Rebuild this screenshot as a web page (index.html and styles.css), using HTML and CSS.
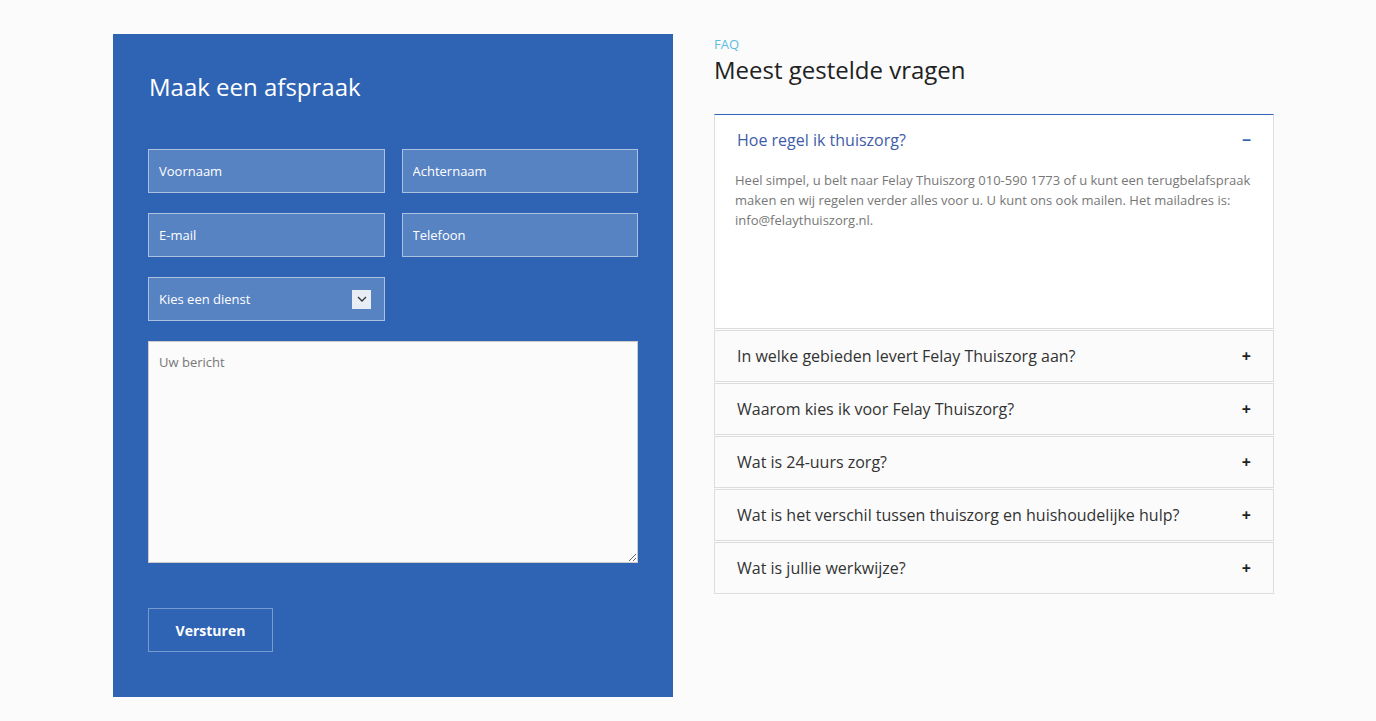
FILE: index.html
```html
<!DOCTYPE html>
<html lang="nl">
<head>
    <meta charset="UTF-8">
    <title>Maak een afspraak</title>
    <link rel="stylesheet" href="styles.css">
</head>
<body>
    <div class="wrapper">
        <div class="appointment">
            <h2>Maak een afspraak</h2>
            <form class="form">
                <div class="row">
                    <input class="field" type="text" placeholder="Voornaam">
                    <input class="field" type="text" placeholder="Achternaam">
                </div>
                <div class="row">
                    <input class="field" type="text" placeholder="E-mail">
                    <input class="field" type="text" placeholder="Telefoon">
                </div>
                <div class="row">
                    <div class="field select">
                        <span>Kies een dienst</span>
                        <span class="select-arrow">
                            <svg width="10" height="6" viewBox="0 0 10 6"><path d="M1 1l4 4 4-4" fill="none" stroke="#333" stroke-width="1.3"/></svg>
                        </span>
                    </div>
                </div>
                <textarea class="message" placeholder="Uw bericht"></textarea>
                <button type="button" class="send">Versturen</button>
            </form>
        </div>

        <div class="faq">
            <div class="faq-label">FAQ</div>
            <h2>Meest gestelde vragen</h2>
            <div class="accordion">
                <div class="item open">
                    <div class="question">
                        <span>Hoe regel ik thuiszorg?</span>
                        <span class="toggle">&minus;</span>
                    </div>
                    <p class="answer">Heel simpel, u belt naar Felay Thuiszorg 010-590 1773 of u kunt een terugbelafspraak maken en wij regelen verder alles voor u. U kunt ons ook mailen. Het mailadres is: info@felaythuiszorg.nl.</p>
                </div>
                <div class="item">
                    <div class="question"><span>In welke gebieden levert Felay Thuiszorg aan?</span><span class="toggle">+</span></div>
                </div>
                <div class="item">
                    <div class="question"><span>Waarom kies ik voor Felay Thuiszorg?</span><span class="toggle">+</span></div>
                </div>
                <div class="item">
                    <div class="question"><span>Wat is 24-uurs zorg?</span><span class="toggle">+</span></div>
                </div>
                <div class="item">
                    <div class="question"><span>Wat is het verschil tussen thuiszorg en huishoudelijke hulp?</span><span class="toggle">+</span></div>
                </div>
                <div class="item">
                    <div class="question"><span>Wat is jullie werkwijze?</span><span class="toggle">+</span></div>
                </div>
            </div>
        </div>
    </div>
</body>
</html>
```

FILE: styles.css
```css
body {
    margin: 0;
    background: #fbfbfb;
    font-family: "Open Sans", Arial, sans-serif;
    color: #333;
}
.wrapper {
    display: flex;
    gap: 41px;
    padding: 34px 0 0 113px;
}
.appointment {
    width: 560px;
    height: 663px;
    box-sizing: border-box;
    background: #2f64b5;
    padding: 35px 35px;
}
.appointment h2 {
    margin: 1px 0 0 1px;
    font-size: 24px;
    font-weight: 400;
    color: #fff;
    line-height: 34px;
}
.form {
    margin-top: 45px;
}
.row {
    display: flex;
    gap: 17px;
    margin-bottom: 20px;
}
.field {
    width: 237px;
    height: 44px;
    box-sizing: border-box;
    background: rgba(255, 255, 255, 0.2);
    border: 1px solid rgba(255, 255, 255, 0.5);
    color: #fff;
    font-family: inherit;
    font-size: 13px;
    padding: 0 10px;
    outline: none;
}
.field::placeholder {
    color: #fff;
}
.select {
    display: flex;
    align-items: center;
    justify-content: space-between;
    padding-right: 13px;
}
.select-arrow {
    width: 19px;
    height: 19px;
    background: #e8edf6;
    display: flex;
    align-items: center;
    justify-content: center;
}
.message {
    display: block;
    width: 490px;
    height: 222px;
    box-sizing: border-box;
    background: #fbfbfb;
    border: 1px solid #ccc;
    font-family: inherit;
    font-size: 13px;
    padding: 11px 10px;
    resize: vertical;
}
.message::placeholder {
    color: #777;
}
.send {
    margin-top: 45px;
    width: 125px;
    height: 44px;
    background: transparent;
    border: 1px solid rgba(255, 255, 255, 0.35);
    color: #fff;
    font-family: inherit;
    font-size: 14px;
    font-weight: 700;
    cursor: pointer;
}
.faq {
    width: 560px;
}
.faq-label {
    font-size: 13px;
    color: #5bbde0;
    line-height: 20px;
}
.faq h2 {
    margin: 0;
    font-size: 24px;
    font-weight: 400;
    color: #222;
    line-height: 32px;
}
.accordion {
    margin-top: 28px;
}
.item {
    background: #fbfbfb;
    border: 1px solid #ddd;
    margin-bottom: 1px;
}
.item.open {
    background: #fff;
    border-top-color: #2f64b5;
    height: 215px;
    box-sizing: border-box;
}
.question {
    display: flex;
    justify-content: space-between;
    align-items: center;
    height: 50px;
    padding: 0 22px;
    font-size: 16px;
    color: #333;
}
.toggle {
    font-size: 16px;
    font-weight: 700;
    color: #222;
}
.open .question {
    color: #3f5ca8;
}
.open .toggle {
    color: #2f64b5;
}
.answer {
    margin: 5px 20px 0 20px;
    font-size: 13px;
    line-height: 20px;
    color: #777;
}
```
